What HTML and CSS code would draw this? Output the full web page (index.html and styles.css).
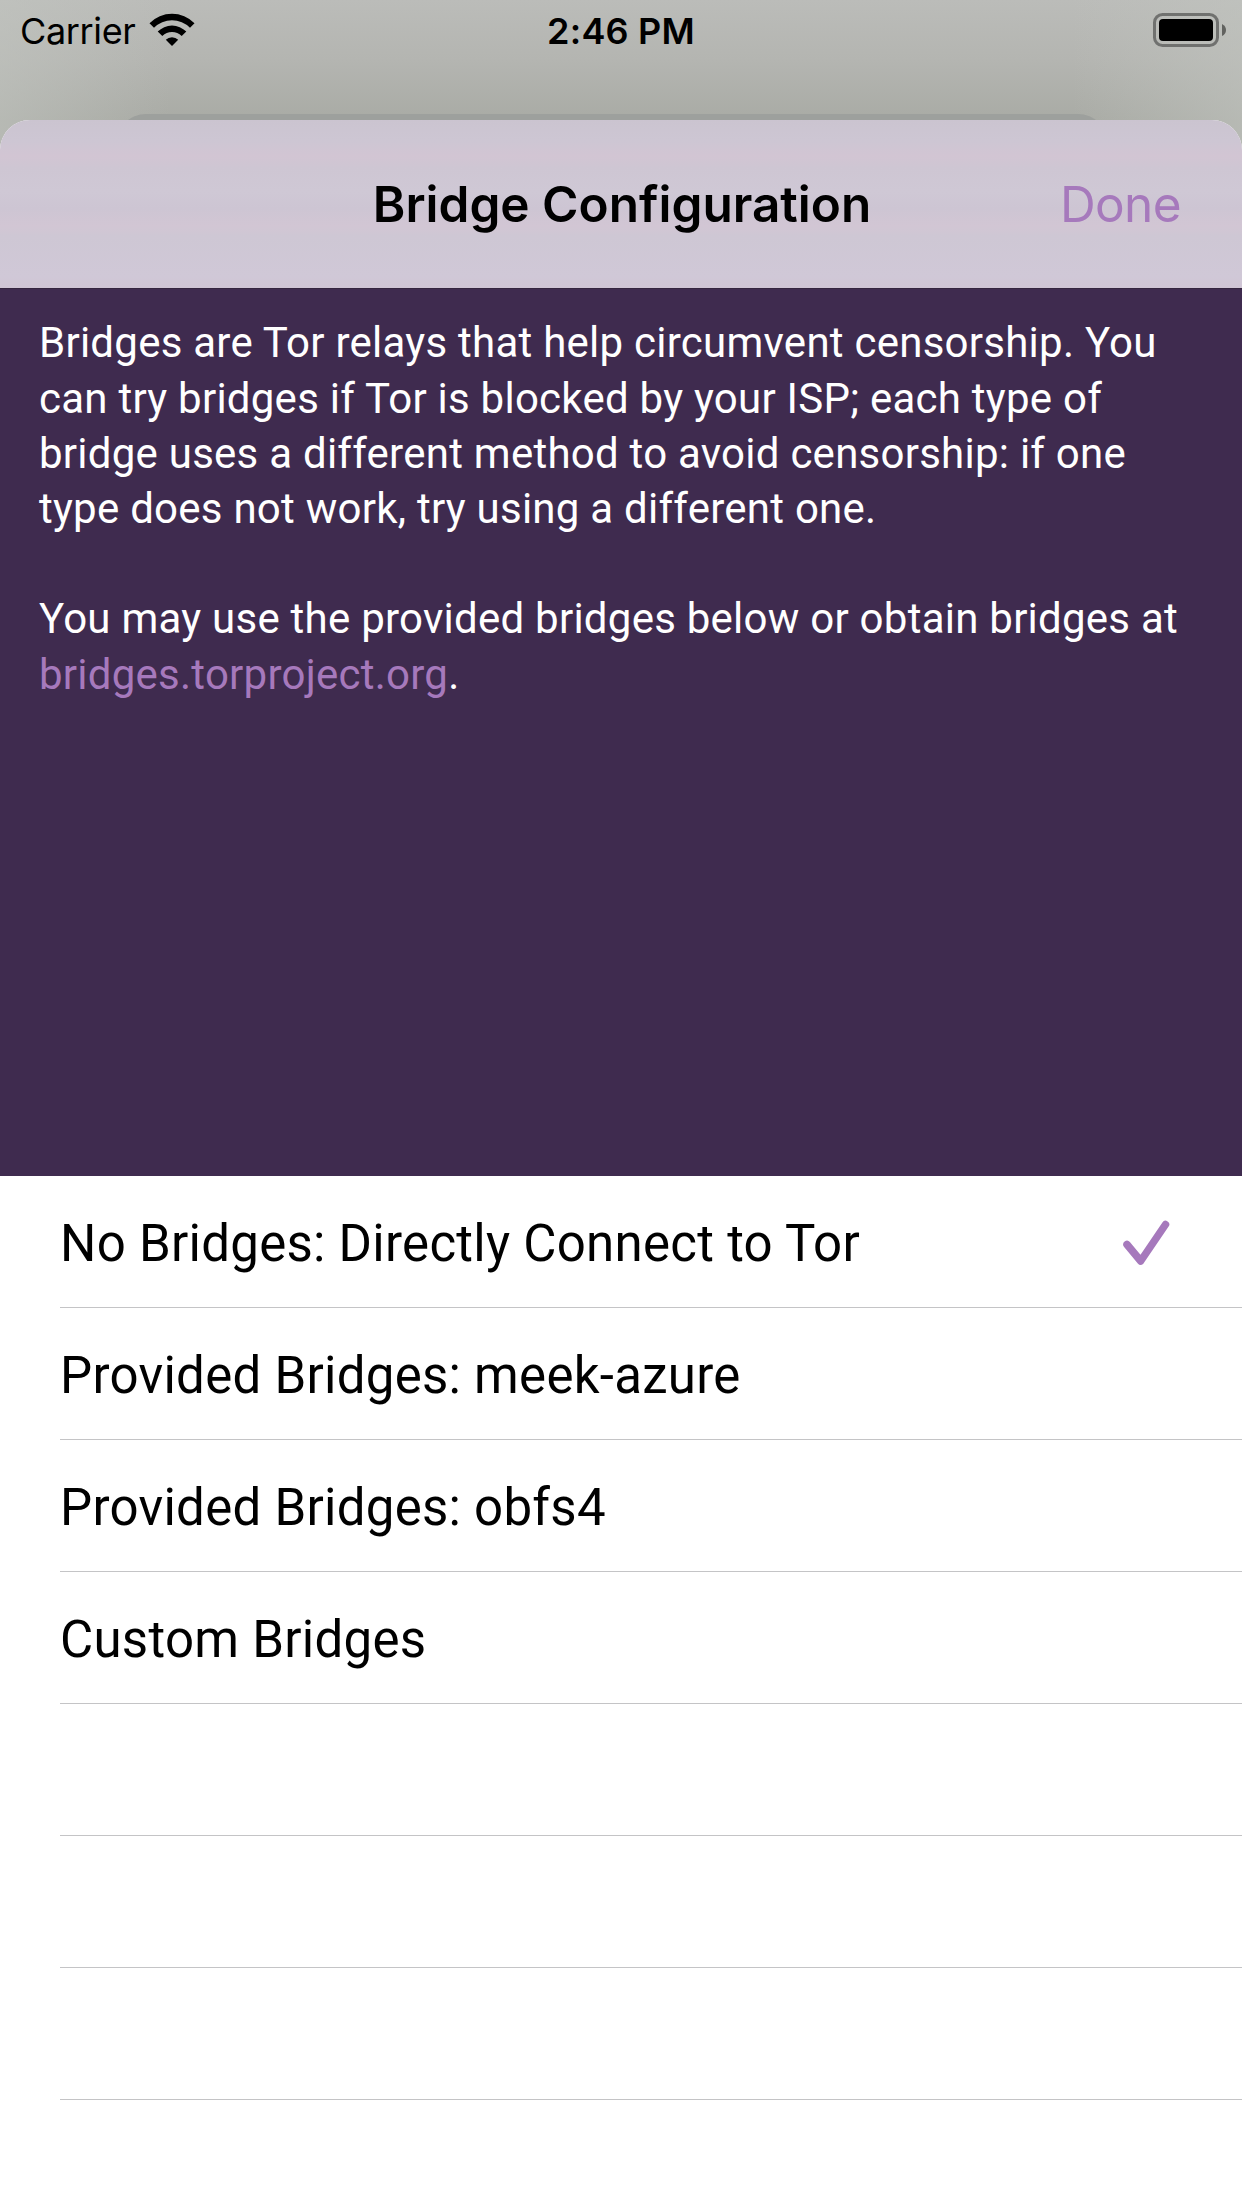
FILE: index.html
```html
<!DOCTYPE html>
<html lang="en">
<head>
<meta charset="utf-8">
<title>Bridge Configuration</title>
<link rel="stylesheet" href="styles.css">
</head>
<body>
<div class="screen">
  <div class="status-bar">
    <div class="carrier">
      <span class="carrier-name">Carrier</span>
      <svg class="wifi" width="46" height="34" viewBox="0 0 46 34">
        <path d="M0.5 10.3 A31.5 31.5 0 0 1 45.5 10.3 L41 14.8 A25.5 25.5 0 0 0 5 14.8 Z"/>
        <path d="M8.7 18.6 A20 20 0 0 1 37.3 18.6 L32.7 23 A14 14 0 0 0 13.3 23 Z"/>
        <path d="M16.8 26.7 A8.8 8.8 0 0 1 29.2 26.7 L23 33 Z"/>
      </svg>
    </div>
    <div class="time">2:46 PM</div>
    <svg class="battery" width="73" height="34" viewBox="0 0 73 34">
      <rect class="battery-shell" x="1.5" y="1.5" width="63" height="31" rx="8"/>
      <rect x="6" y="6" width="54" height="22" rx="4"/>
      <path class="battery-cap" d="M69 11 Q73 13 73 17 Q73 21 69 23 Z"/>
    </svg>
    <div class="back-card"></div>
  </div>

  <main class="sheet">
    <header class="nav-bar">
      <h1 class="nav-title">Bridge Configuration</h1>
      <a class="nav-done">Done</a>
    </header>

    <section class="intro">
      <p>Bridges are Tor relays that help circumvent censorship. You<br>can try bridges if Tor is blocked by your ISP; each type of<br>bridge uses a different method to avoid censorship: if one<br>type does not work, try using a different one.</p>
      <p>You may use the provided bridges below or obtain bridges at<br><a class="link">bridges.torproject.org</a>.</p>
    </section>

    <ul class="options">
      <li class="option">
        <span>No Bridges: Directly Connect to Tor</span>
        <svg class="check" width="48" height="46" viewBox="0 0 48 46">
          <path d="M5 24.5 L18.7 41 L43.5 4.5"/>
        </svg>
      </li>
      <li class="option"><span>Provided Bridges: meek-azure</span></li>
      <li class="option"><span>Provided Bridges: obfs4</span></li>
      <li class="option"><span>Custom Bridges</span></li>
      <li class="option"></li>
      <li class="option"></li>
      <li class="option"></li>
    </ul>
  </main>
</div>
</body>
</html>
```
FILE: styles.css
```css
* {
  box-sizing: border-box;
}

body {
  margin: 0;
  background: #fff;
  color: #000;
}

.screen {
  width: 1242px;
  height: 2208px;
  display: flex;
  flex-direction: column;
  overflow: hidden;
  background:
    linear-gradient(90deg, rgba(194, 197, 192, 0.55), rgba(194, 197, 192, 0) 170px),
    linear-gradient(270deg, rgba(194, 197, 192, 0.55), rgba(194, 197, 192, 0) 170px),
    linear-gradient(#bbbcb9 0, #b4b5b1 60px, #a9aba5 120px);
}

.status-bar {
  position: relative;
  height: 120px;
  flex: none;
  display: grid;
  grid-template-columns: 1fr auto 1fr;
  align-items: start;
  padding: 0 16px 0 20px;
  font-family: Inter, "Liberation Sans", sans-serif;
  font-size: 36px;
  line-height: 44px;
}

.carrier {
  display: flex;
  align-items: flex-start;
}

.carrier-name {
  width: 129px;
  padding-top: 9px;
  letter-spacing: -0.35px;
}

.wifi {
  margin-top: 13px;
}

.time {
  padding: 9px 4px 0 0;
  font-weight: 600;
  letter-spacing: 0.2px;
}

.battery {
  justify-self: end;
  margin-top: 13px;
}

.battery-shell {
  fill: none;
  stroke: #70716f;
  stroke-width: 3;
}

.battery-cap {
  fill: #61625f;
}

/* Edge of the card lying behind the sheet */
.back-card {
  position: absolute;
  left: 116px;
  right: 134px;
  bottom: 0;
  height: 6px;
  overflow: hidden;
}

.back-card::before {
  content: "";
  display: block;
  height: 80px;
  border-radius: 30px;
  background: #9da09d;
}

.sheet {
  flex: 1;
  display: flex;
  flex-direction: column;
  border-radius: 30px 30px 0 0;
  overflow: hidden;
  background: #fff;
}

.nav-bar {
  flex: none;
  height: 169px;
  display: grid;
  grid-template-columns: 1fr auto 1fr;
  align-items: center;
  padding: 0 61px 0 63px;
  border-bottom: 1px solid #35253f;
  background: linear-gradient(#cbc4d0 0, #cdc6d3 20px, #d2c5d3 36px, #cec6d3 48px, #cfc8d5 72px, #cdc5d3 88px, #d2c6d4 106px, #cec7d4 116px, #d0c8d7 156px, #d0c5d5 168px);
  font-family: Inter, "Liberation Sans", sans-serif;
  font-size: 49.5px;
  line-height: 60px;
}

.nav-title {
  grid-column: 2;
  margin: 0;
  font-size: inherit;
  font-weight: 600;
}

.nav-done {
  justify-self: end;
  color: #a679bc;
  letter-spacing: -0.6px;
}

.intro {
  flex: none;
  height: 887px;
  padding: 26.3px 39px 0;
  background: #3f2b4f;
  color: #fff;
  font-family: Roboto, sans-serif;
  font-size: 42px;
  line-height: 55.2px;
  letter-spacing: 0.25px;
  white-space: nowrap;
}

.intro p {
  margin: 0 0 55.2px;
}

.link {
  color: #a679bc;
}

.options {
  margin: 0;
  padding: 0 0 0 60px;
  list-style: none;
  font-family: Roboto, sans-serif;
  font-size: 51px;
  line-height: 60px;
  letter-spacing: 0.27px;
}

.option {
  height: 132px;
  display: flex;
  align-items: center;
  justify-content: space-between;
  padding: 3px 72px 0 0;
  border-bottom: 1px solid #c4c4c6;
}

.option span {
  margin-top: 2px;
}

.check {
  fill: none;
  stroke: #a679bc;
  stroke-width: 7.5;
  stroke-linecap: round;
  stroke-linejoin: round;
}
```
